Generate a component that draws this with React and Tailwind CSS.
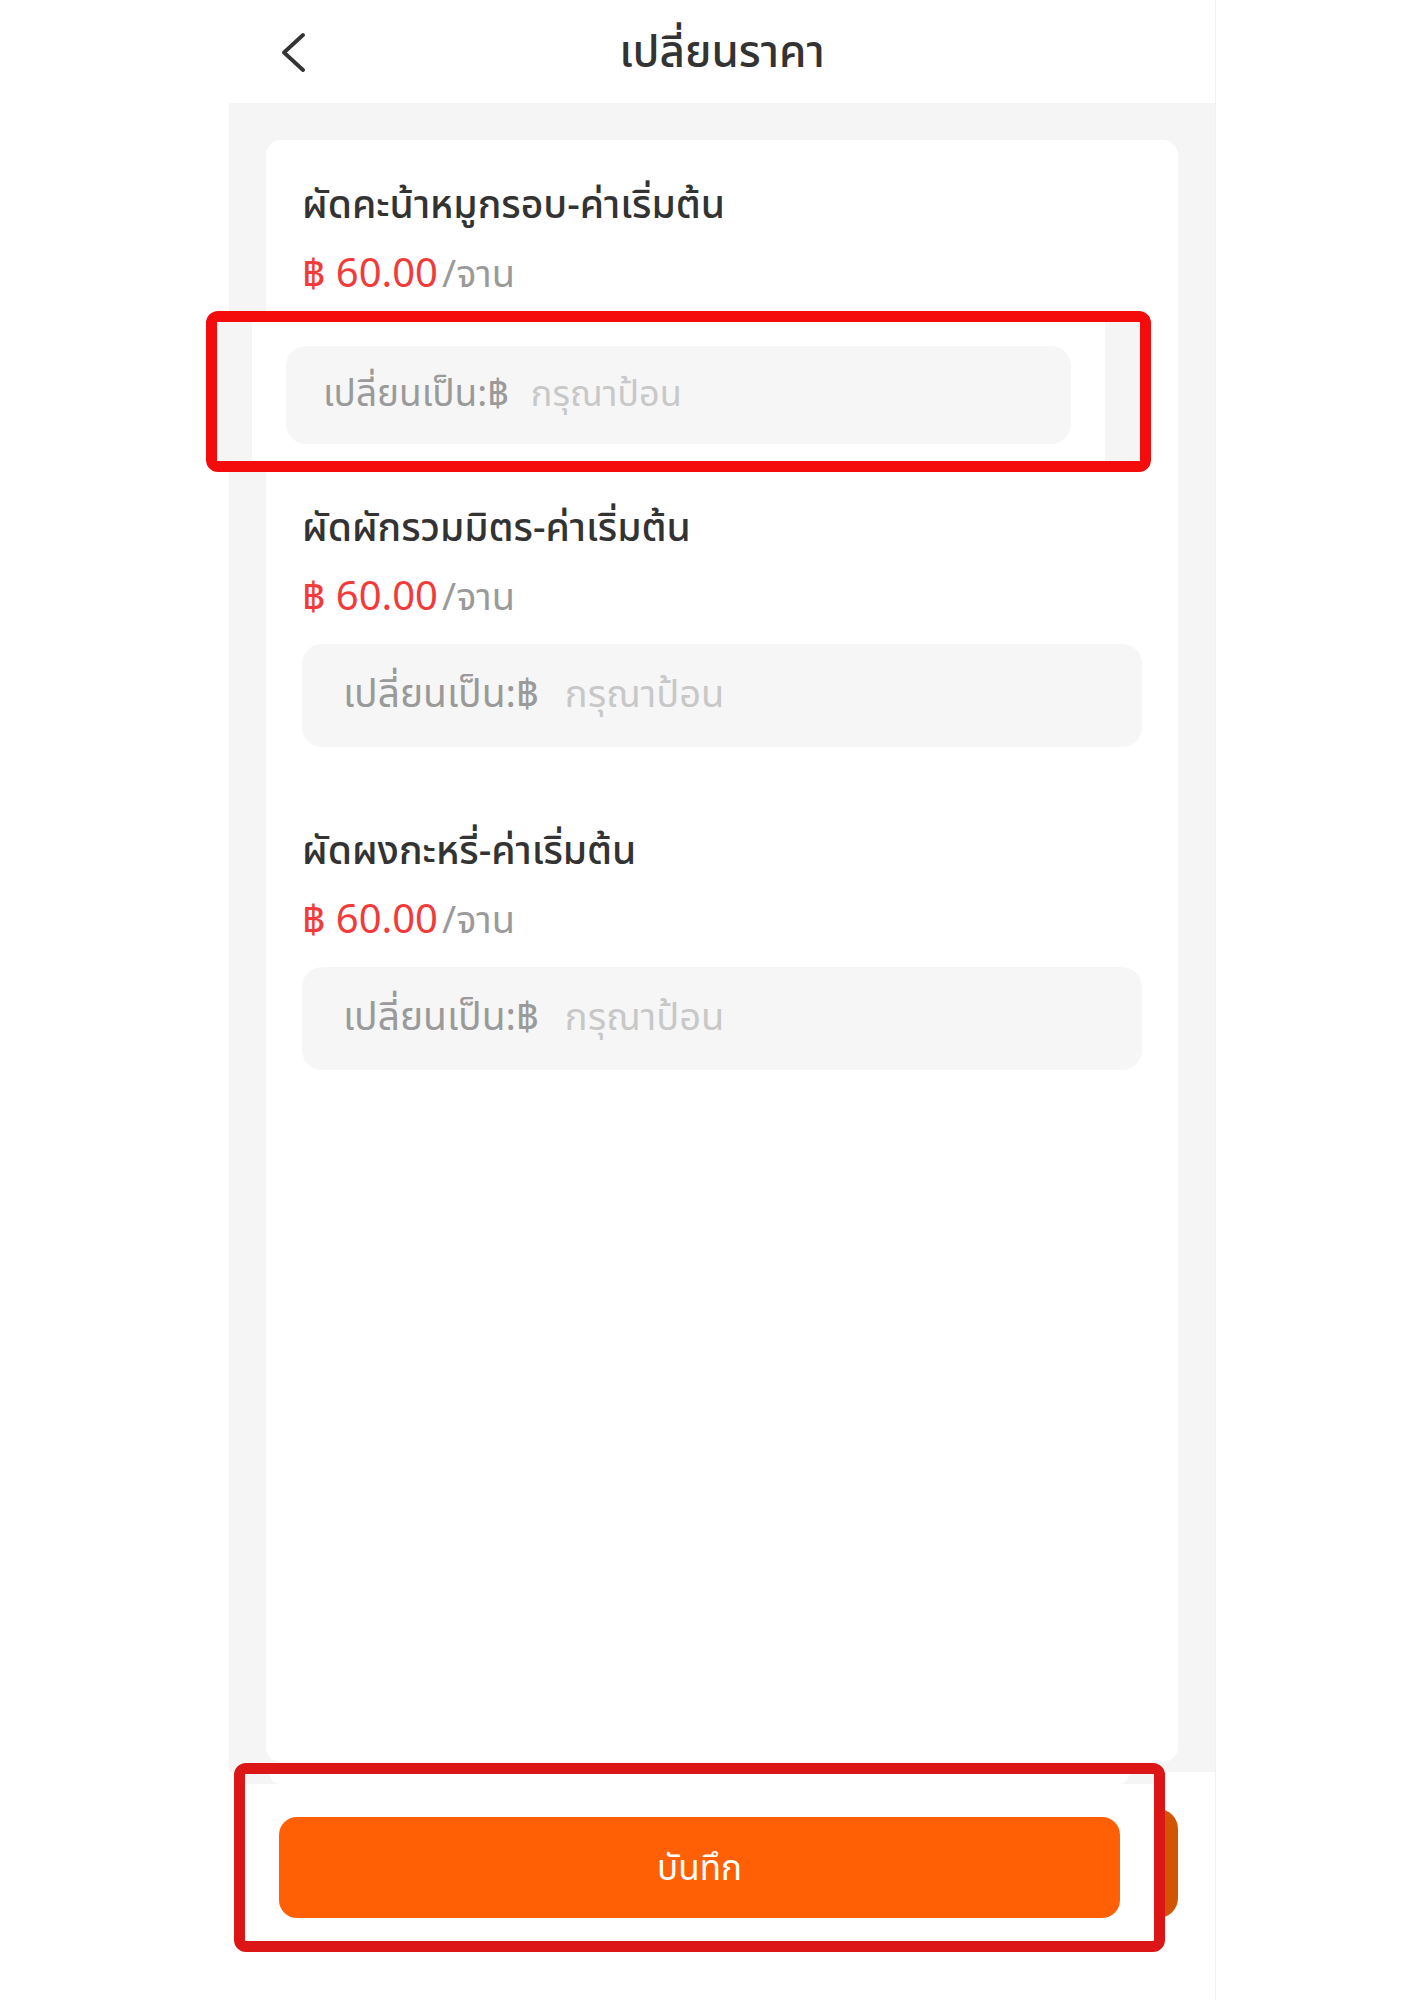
import React from "react";

const FONT = { fontFamily: "'Noto Sans Thai', 'Noto Sans', sans-serif" };

function PriceInput({ small, hidden }) {
  return (
    <div
      className={
        small
          ? "h-[98px] rounded-[20px] bg-[#f6f6f6] flex items-center pl-[37px] leading-[54px]"
          : "mt-[17px] h-[103px] rounded-[20px] bg-[#f6f6f6] flex items-center pl-[41px] leading-[56px]"
      }
    >
      <div className={hidden ? "invisible flex items-center" : "flex items-center"}>
        <span className={small ? "text-[37px] text-[#9a9a9a]" : "text-[39px] text-[#9a9a9a]"}>เปลี่ยนเป็น:฿</span>
        <span className={small ? "ml-[22px] text-[36px] text-[#c8c8c8]" : "ml-[26px] text-[38px] text-[#c8c8c8]"}>กรุณาป้อน</span>
      </div>
    </div>
  );
}

function Item({ name, covered }) {
  return (
    <div className="flex flex-col">
      <div className="text-[39px] leading-[56px] font-medium text-[#333333]">{name}</div>
      <div className="mt-[12px] flex items-baseline leading-[56px]">
        <span className="text-[40px] text-[#f23a3a]">฿ 60.00</span>
        <span className="ml-[4px] text-[38px] text-[#9a9a9a]">/จาน</span>
      </div>
      <PriceInput hidden={covered} />
    </div>
  );
}

export default function App() {
  return (
    <div className="relative h-[2000px] w-[1414px] bg-white overflow-hidden" style={FONT}>
      <div className="ml-[229px] w-[987px] h-[2000px] flex flex-col border-r border-[#f1f1f1]">
        {/* Header */}
        <div className="h-[103px] grid grid-cols-[1fr_auto_1fr] items-center bg-white">
          <div className="pl-[51px] flex items-center">
            <svg width="26" height="40" viewBox="0 0 26 40" fill="none">
              <polyline points="23,3 4,20.5 23,38" stroke="#333333" strokeWidth="3.8" strokeLinecap="round" strokeLinejoin="round" />
            </svg>
          </div>
          <div className="text-[44px] leading-[56px] pt-[5px] font-medium text-[#333333]">เปลี่ยนราคา</div>
          <div />
        </div>

        {/* Gray content area */}
        <div className="h-[1669px] bg-[#f5f5f5] pt-[37px] px-[37px] pb-[10px] flex flex-col">
          <div className="flex-1 bg-white rounded-[15px] pt-[39px] px-[36px] flex flex-col gap-[78px]">
            <Item name="ผัดคะน้าหมูกรอบ-ค่าเริ่มต้น" covered />
            <Item name="ผัดผักรวมมิตร-ค่าเริ่มต้น" />
            <Item name="ผัดผงกะหรี่-ค่าเริ่มต้น" />
          </div>
        </div>

        {/* Bottom bar */}
        <div className="flex-1 bg-white pt-[37px] px-[37px]">
          <div className="h-[109px] rounded-[20px] bg-[#d25405]" />
        </div>
      </div>

      {/* Annotation box 1 */}
      <div className="absolute left-[206px] top-[311px] w-[945px] h-[161px] border-[11px] border-[#f40c0c] rounded-[12px] bg-white flex overflow-hidden">
        <div className="w-[35px] bg-[#f5f5f5]" />
        <div className="flex-1 bg-white pt-[24px] px-[34px]">
          <PriceInput small />
        </div>
        <div className="w-[35px] bg-[#f5f5f5]" />
      </div>

      {/* Annotation box 2 */}
      <div className="absolute left-[234px] top-[1763px] w-[931px] h-[189px] border-[11px] border-[#dc1517] rounded-[12px] bg-white flex flex-col overflow-hidden">
        <div className="h-[10px] bg-[#f5f5f5] px-[25px]">
          <div className="h-full bg-white rounded-b-[12px]" />
        </div>
        <div className="pt-[33px] px-[34px]">
          <div className="h-[101px] rounded-[18px] bg-[#ff6005] flex items-center justify-center text-[35px] leading-[56px] pt-[5px] text-white">
            บันทึก
          </div>
        </div>
      </div>
    </div>
  );
}
